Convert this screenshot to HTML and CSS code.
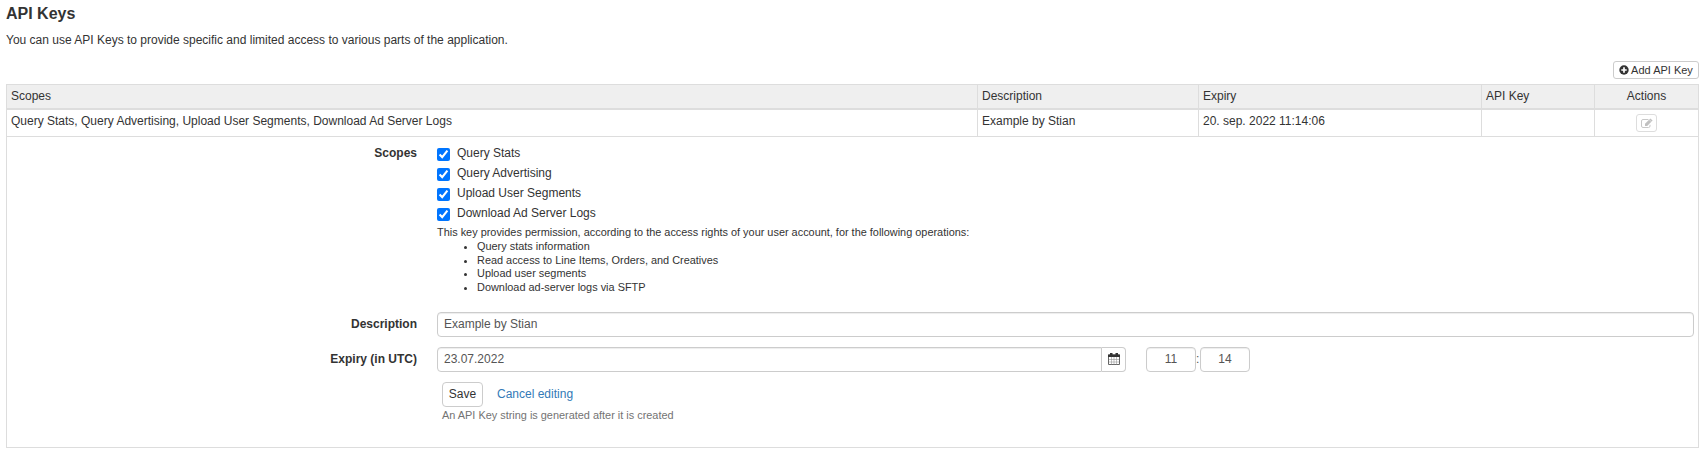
FILE: index.html
```html
<!DOCTYPE html>
<html lang="en">
<head>
<meta charset="utf-8">
<title>API Keys</title>
<link rel="stylesheet" href="styles.css">
</head>
<body>
<main class="page">
  <h1 class="title">API Keys</h1>
  <p class="intro">You can use API Keys to provide specific and limited access to various parts of the application.</p>
  <div class="toolbar">
    <button class="btn btn-add" type="button">
      <svg class="icon-plus" viewBox="0 0 10 10" aria-hidden="true"><circle cx="5" cy="5" r="4.7" fill="#333"/><path d="M5 2.3v5.4M2.3 5h5.4" stroke="#fff" stroke-width="1.7"/></svg>
      <span>Add API Key</span>
    </button>
  </div>
  <section class="table">
    <div class="row head">
      <div class="cell">Scopes</div><div class="cell">Description</div><div class="cell">Expiry</div><div class="cell">API Key</div><div class="cell actions">Actions</div>
    </div>
    <div class="row item">
      <div class="cell">Query Stats, Query Advertising, Upload User Segments, Download Ad Server Logs</div><div class="cell">Example by Stian</div><div class="cell">20. sep. 2022 11:14:06</div><div class="cell"></div>
      <div class="cell actions">
        <button class="btn btn-edit" type="button" aria-label="Edit">
          <svg class="icon-edit" viewBox="0 0 12 11" aria-hidden="true"><path d="M7.500 1.500H2Q.5 1.500.5 3v5q0 1.500 1.500 1.500h5.500Q9 9.500 9 8V6.800" fill="none" stroke="#c8c8c8"/><path d="M4 8V5.800L9.400.4l2.200 2.200L6.200 8z" fill="#c0c0c0"/><path d="M8.200 1.600l2.200 2.200" stroke="#fff" stroke-width=".5"/></svg>
        </button>
      </div>
    </div>
    <form class="editor">
      <div class="field">
        <div class="label">Scopes</div>
        <div class="control">
          <label class="check"><input class="box" type="checkbox" checked>Query Stats</label>
          <label class="check"><input class="box" type="checkbox" checked>Query Advertising</label>
          <label class="check"><input class="box" type="checkbox" checked>Upload User Segments</label>
          <label class="check"><input class="box" type="checkbox" checked>Download Ad Server Logs</label>
          <div class="help">This key provides permission, according to the access rights of your user account, for the following operations:
            <ul class="ops">
              <li>Query stats information</li>
              <li>Read access to Line Items, Orders, and Creatives</li>
              <li>Upload user segments</li>
              <li>Download ad-server logs via SFTP</li>
            </ul>
          </div>
        </div>
      </div>
      <div class="field field-desc">
        <label class="label" for="desc">Description</label>
        <input class="input" id="desc" type="text" value="Example by Stian">
      </div>
      <div class="field field-expiry">
        <label class="label" for="date">Expiry (in UTC)</label>
        <div class="expiry">
          <input class="input date" id="date" type="text" value="23.07.2022">
          <span class="addon">
            <svg class="icon-cal" viewBox="0 0 12 12" aria-hidden="true"><path d="M.5 2v9.500h11V2z" fill="#fff" stroke="#666"/><path d="M0 1.500h12V4H0z" fill="#333"/><path d="M2 0h2.500v2.500H2zM7.500 0H10v2.500H7.500z" fill="#333"/><path d="M3.500 4v7.500M6 4v7.500M8.500 4v7.500M1 6.500h10M1 9h10" stroke="#999" stroke-width=".6"/></svg>
          </span>
          <input class="input time hour" type="text" value="11" aria-label="Hour"><span class="colon">:</span><input class="input time" type="text" value="14" aria-label="Minute">
        </div>
      </div>
      <div class="buttons">
        <button class="btn btn-save" type="button">Save</button>
        <a class="cancel">Cancel editing</a>
      </div>
      <p class="footnote">An API Key string is generated after it is created</p>
    </form>
  </section>
</main>
</body>
</html>
```
FILE: styles.css
```css
* { box-sizing: border-box; }
body { margin: 0; background: #fff; color: #333; font: 12px/16px "Liberation Sans", Arial, sans-serif; }
.page { padding: 4px 6px 0; }
.title { margin: 0; font-size: 16px; line-height: 20px; }
.intro { margin: 8px 0 0; }
.toolbar { display: flex; justify-content: flex-end; height: 36px; padding-top: 13px; }
.btn { display: flex; align-items: center; justify-content: center; margin: 0; padding: 0; background: #fff; border: 1px solid #ccc; border-radius: 3px; color: #333; font: inherit; }
.btn-add { width: 86px; height: 18px; gap: 2px; font-size: 11px; white-space: nowrap; }
.icon-plus { width: 10px; height: 10px; flex: none; }

.table { width: 1693px; height: 364px; border: 1px solid #ddd; }
.row { display: grid; grid-template-columns: 970px 221px 283px 113px 104px; }
.cell { padding: 3px 4px 0; border-left: 1px solid #ddd; white-space: nowrap; }
.cell:first-child { border-left: 0; }
.head { height: 25px; background: #efefef; border-bottom: 2px solid #ddd; }
.item { height: 27px; border-bottom: 1px solid #ddd; }
.actions { text-align: center; }
.item .actions { display: flex; justify-content: center; padding-top: 4px; }
.btn-edit { width: 21px; height: 18px; border-color: #ddd; }
.icon-edit { width: 12px; height: 11px; }

.editor { margin: 0; padding-top: 8px; }
.field { display: grid; grid-template-columns: 410px 1257px; column-gap: 20px; }
.label { text-align: right; font-weight: bold; }
.check { display: flex; height: 20px; }
.box { width: 13px; height: 13px; margin: 3px 7px 0 0; accent-color: #0075ff; }
.help { padding-top: 1px; font-size: 10.92px; line-height: 13.75px; }
.ops { margin: 0; padding-left: 40px; }
.field-desc { margin-top: 17px; }
.field-desc, .field-expiry { height: 25px; line-height: 24px; }
.field-expiry { margin-top: 10px; }
.input { width: 100%; height: 25px; margin: 0; padding: 0 6px 1px; border: 1px solid #ccc; border-radius: 4px; background: #fff; box-shadow: inset 0 1px 1px rgba(0, 0, 0, .075); color: #555; font: inherit; }
.expiry { display: flex; }
.date { width: 665px; border-radius: 4px 0 0 4px; }
.addon { display: flex; align-items: center; justify-content: center; width: 24px; height: 25px; border: 1px solid #ccc; border-left: 0; border-radius: 0 4px 4px 0; }
.icon-cal { width: 12px; height: 12px; }
.time { width: 50px; text-align: center; }
.hour { margin-left: 20px; }
.colon { width: 4px; color: #555; }
.buttons { display: flex; gap: 14px; margin: 10px 0 0 435px; }
.btn-save { width: 41px; height: 25px; padding-bottom: 1px; border-radius: 4px; }
.cancel { line-height: 24px; color: #337ab7; }
.footnote { margin: 1px 0 0 435px; color: #737373; font-size: 10.92px; line-height: 14px; }
```
